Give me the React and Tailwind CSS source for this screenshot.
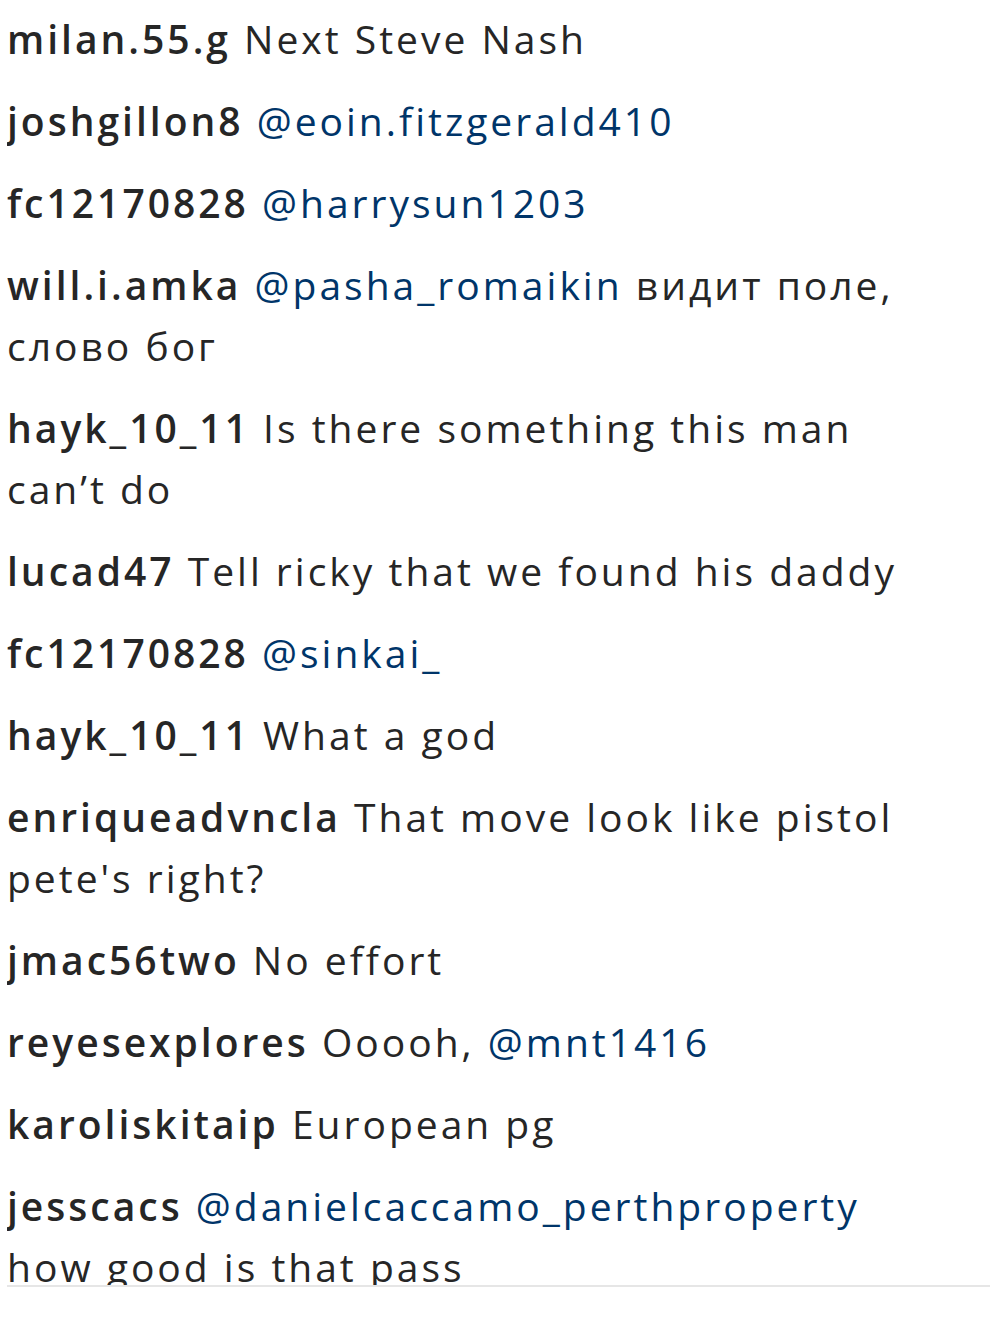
import React from "react";

const comments = [
  { u: "milan.55.g", parts: [["t", "Next Steve Nash"]] },
  { u: "joshgillon8", parts: [["a", "@eoin.fitzgerald410"]] },
  { u: "fc12170828", parts: [["a", "@harrysun1203"]] },
  { u: "will.i.amka", parts: [["a", "@pasha_romaikin"], ["t", " видит поле,"], ["br"], ["t", "слово бог"]] },
  { u: "hayk_10_11", parts: [["t", "Is there something this man"], ["br"], ["t", "can’t do"]] },
  { u: "lucad47", parts: [["t", "Tell ricky that we found his daddy"]] },
  { u: "fc12170828", parts: [["a", "@sinkai_"]] },
  { u: "hayk_10_11", parts: [["t", "What a god"]] },
  { u: "enriqueadvncla", parts: [["t", "That move look like pistol"], ["br"], ["t", "pete's right?"]] },
  { u: "jmac56two", parts: [["t", "No effort"]] },
  { u: "reyesexplores", parts: [["t", "Ooooh, "], ["a", "@mnt1416"]] },
  { u: "karoliskitaip", parts: [["t", "European pg"]] },
  { u: "jesscacs", parts: [["a", "@danielcaccamo_perthproperty"], ["br"], ["t", "how good is that pass"]] },
];

export default function App() {
  return (
    <div className="w-[1000px] h-[1321px] bg-white">
      <div
        className="ml-[7px] w-[983px] h-[1287px] overflow-hidden border-b-2 border-[#e6e6e6] flex flex-col gap-[21px] pt-[8px] text-[39px] leading-[61px] tracking-[3px] text-[#262626]"
        style={{ fontFamily: '"Open Sans", "Noto Sans", sans-serif' }}
      >
        {comments.map((c, i) => (
          <div key={i} className="whitespace-nowrap">
            <span className="font-semibold">{c.u}</span>{" "}
            {c.parts.map((p, j) =>
              p[0] === "br" ? (
                <br key={j} />
              ) : p[0] === "a" ? (
                <span key={j} className="text-[#003569]">{p[1]}</span>
              ) : (
                <span key={j}>{p[1]}</span>
              )
            )}
          </div>
        ))}
      </div>
    </div>
  );
}
